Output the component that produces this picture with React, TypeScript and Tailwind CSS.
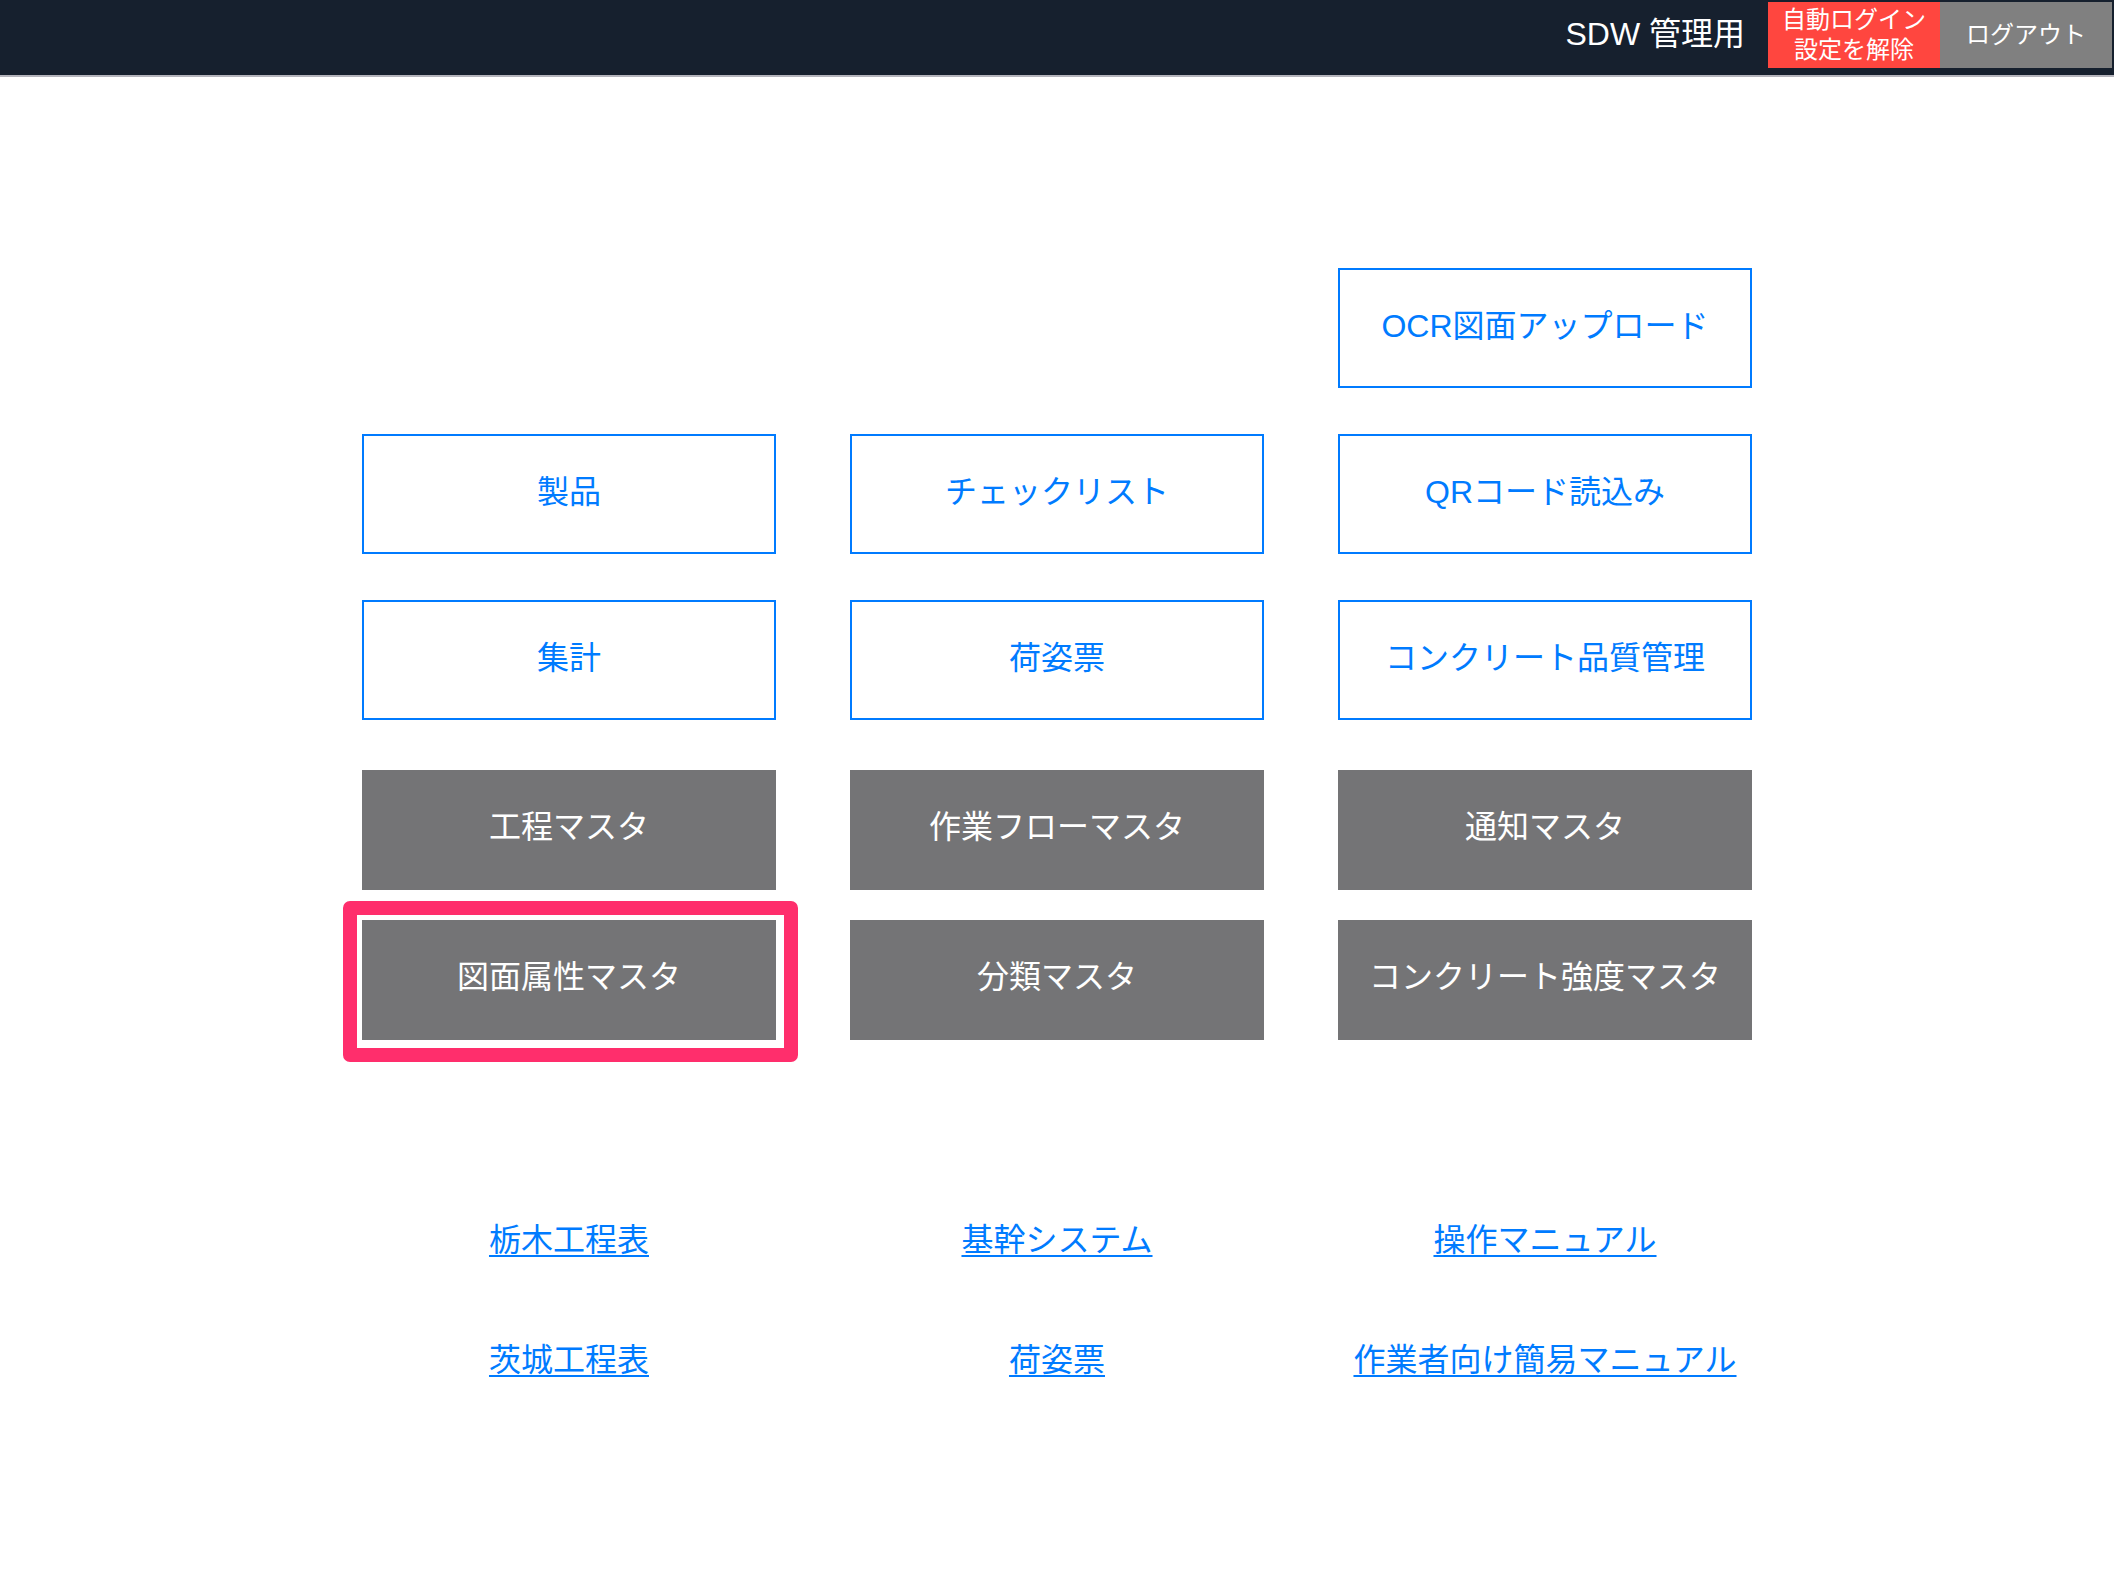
import React from "react"

const FONT = "font-['Liberation_Sans','Noto_Sans_CJK_JP',sans-serif]"

const outlineButtons = [
  ["", "", "OCR図面アップロード"],
  ["製品", "チェックリスト", "QRコード読込み"],
  ["集計", "荷姿票", "コンクリート品質管理"],
]

const masterButtons = [
  ["工程マスタ", "作業フローマスタ", "通知マスタ"],
  ["図面属性マスタ", "分類マスタ", "コンクリート強度マスタ"],
]

const links = [
  ["栃木工程表", "基幹システム", "操作マニュアル"],
  ["茨城工程表", "荷姿票", "作業者向け簡易マニュアル"],
]

const OutlineButton = ({ label }: { label: string }) => {
  if (!label) return <div className="h-[120px]" />
  return (
    <button className="h-[120px] w-full border-2 border-[#007bff] bg-white text-[32px] text-[#007bff] flex items-center justify-center pb-[5px]">
      {label}
    </button>
  )
}

const MasterButton = ({ label, highlight }: { label: string; highlight?: boolean }) => (
  <div className="relative">
    <button className="h-[120px] w-full bg-[#747476] text-[32px] text-white flex items-center justify-center pb-[6px]">
      {label}
    </button>
    {highlight && (
      // annotation frame drawn over the button
      <div className="absolute -left-[19px] -top-[19px] -right-[22px] -bottom-[22px] border-[14px] border-[#ff2e6c] rounded-[7px] pointer-events-none" />
    )}
  </div>
)

export default function App() {
  return (
    <div className={`${FONT} min-h-[1582px] bg-white`}>
      <header className="h-[77px] bg-[#16202e] border-b-2 border-[#b4b4bc] flex justify-end items-start pt-[2px] pr-[2px]">
        <div className="h-[66px] flex items-center">
          <span className="text-[32px] text-white mr-[23px] pb-[2px]">SDW 管理用</span>
          <button className="h-[66px] w-[172px] bg-[#ff463f] text-white text-[24px] leading-[30px] flex flex-col items-center justify-center">
            <span>自動ログイン</span>
            <span>設定を解除</span>
          </button>
          <button className="h-[66px] w-[172px] bg-[#808080] text-white text-[24px]">
            ログアウト
          </button>
        </div>
      </header>

      <main className="w-[1390px] mx-auto pt-[191px]">
        <div className="grid grid-cols-3 gap-x-[74px] gap-y-[46px]">
          {outlineButtons.flat().map((label, i) => (
            <OutlineButton key={i} label={label} />
          ))}
        </div>

        <div className="grid grid-cols-3 gap-x-[74px] gap-y-[30px] mt-[50px]">
          {masterButtons.flat().map((label, i) => (
            <MasterButton key={i} label={label} highlight={label === "図面属性マスタ"} />
          ))}
        </div>

        <div className="grid grid-cols-3 gap-x-[74px] gap-y-[72px] mt-[176px]">
          {links.flat().map((label, i) => (
            <div key={i} className="h-[48px] flex items-center justify-center">
              <a href="#" className="text-[32px] leading-[48px] text-[#007bff] underline underline-offset-[4px] decoration-2">
                {label}
              </a>
            </div>
          ))}
        </div>
      </main>
    </div>
  )
}
